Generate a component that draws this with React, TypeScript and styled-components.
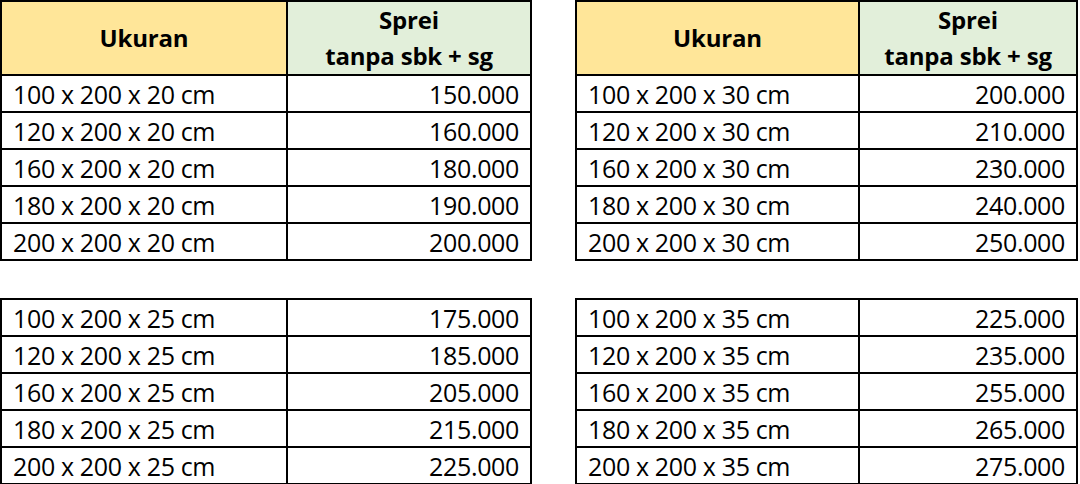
import React from "react";
import styled, { createGlobalStyle } from "styled-components";

const GlobalStyle = createGlobalStyle`
  html, body {
    margin: 0;
    padding: 0;
    background: #ffffff;
  }
  body {
    font-family: "Open Sans", "Noto Sans", sans-serif;
    color: #000000;
  }
`;

const Page = styled.div`
  display: flex;
  gap: 43px;
  width: 1080px;
  height: 484px;
  overflow: hidden;
`;

const Column = styled.div`
  display: flex;
  flex-direction: column;
  gap: 37px;
`;

const Grid = styled.div<{ left: number; right: number; header?: boolean }>`
  display: grid;
  grid-template-columns: ${(p) => p.left}px ${(p) => p.right}px;
  grid-template-rows: ${(p) => (p.header ? "72px" : "none")};
  grid-auto-rows: 35px;
  gap: 2px;
  padding: 2px;
  background: #000000;
  width: max-content;
`;

const HeadCell = styled.div<{ tone: "gold" | "green" }>`
  background: ${(p) => (p.tone === "gold" ? "#ffe699" : "#e2efda")};
  display: flex;
  flex-direction: column;
  align-items: center;
  justify-content: center;
  font-weight: 700;
  font-size: 24px;
  line-height: 36px;
  text-align: center;
  letter-spacing: -0.2px;
`;

const Cell = styled.div<{ align?: "left" | "right" }>`
  background: #ffffff;
  display: flex;
  align-items: center;
  justify-content: ${(p) => (p.align === "right" ? "flex-end" : "flex-start")};
  padding: 0 ${(p) => (p.align === "right" ? "11px" : "0")} 0
    ${(p) => (p.align === "right" ? "0" : "11px")};
  font-size: 25px;
  letter-spacing: -0.35px;
  white-space: nowrap;
`;

type Row = [string, string];

const makeRows = (depth: number, prices: string[]): Row[] =>
  ["100", "120", "160", "180", "200"].map((w, i) => [
    `${w} x 200 x ${depth} cm`,
    prices[i],
  ]);

const PriceTable: React.FC<{
  rows: Row[];
  header?: boolean;
  left: number;
  right: number;
}> = ({ rows, header, left, right }) => (
  <Grid left={left} right={right} header={header}>
    {header && (
      <>
        <HeadCell tone="gold">Ukuran</HeadCell>
        <HeadCell tone="green">
          <span>Sprei</span>
          <span>tanpa sbk + sg</span>
        </HeadCell>
      </>
    )}
    {rows.map(([size, price]) => (
      <React.Fragment key={size}>
        <Cell>{size}</Cell>
        <Cell align="right">{price}</Cell>
      </React.Fragment>
    ))}
  </Grid>
);

export default function App() {
  return (
    <>
      <GlobalStyle />
      <Page>
        <Column>
          <PriceTable
            header
            left={284}
            right={242}
            rows={makeRows(20, ["150.000", "160.000", "180.000", "190.000", "200.000"])}
          />
          <PriceTable
            left={284}
            right={242}
            rows={makeRows(25, ["175.000", "185.000", "205.000", "215.000", "225.000"])}
          />
        </Column>
        <Column>
          <PriceTable
            header
            left={281}
            right={216}
            rows={makeRows(30, ["200.000", "210.000", "230.000", "240.000", "250.000"])}
          />
          <PriceTable
            left={281}
            right={216}
            rows={makeRows(35, ["225.000", "235.000", "255.000", "265.000", "275.000"])}
          />
        </Column>
      </Page>
    </>
  );
}
